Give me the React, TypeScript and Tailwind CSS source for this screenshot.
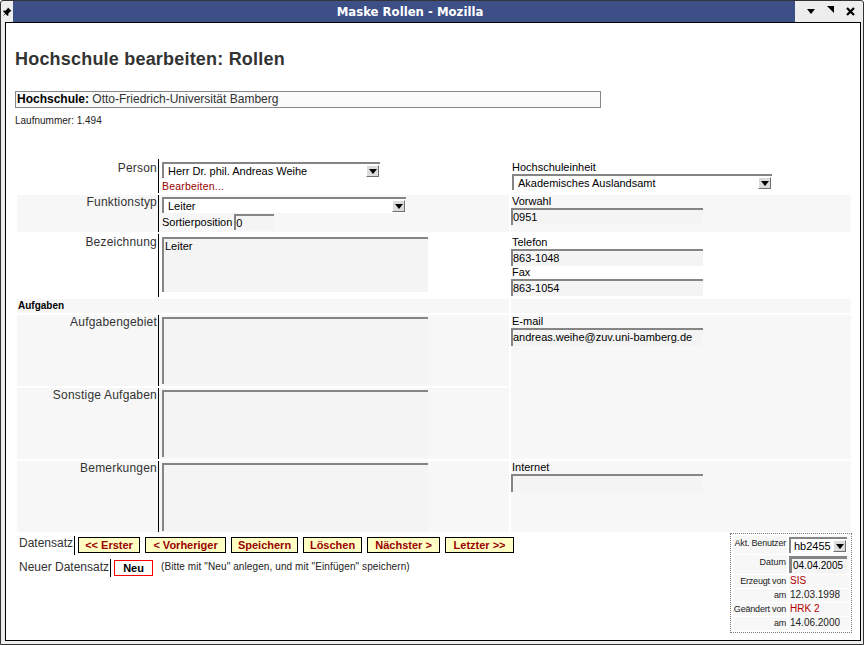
import React from 'react';

function Arrow() {
  return (
    <span className="mr-[1px] mt-[1px] flex h-[12px] w-[13px] shrink-0 items-center justify-center border-r border-b border-[#6f6f6f] border-l border-t border-l-white border-t-white bg-[#dcdcdc]">
      <svg width="8" height="5" viewBox="0 0 8 5">
        <path d="M0 0h8L4 5z" fill="#000" />
      </svg>
    </span>
  );
}

function Select({ value, className }: { value: string; className: string }) {
  return (
    <div className={`flex h-[16px] items-start border-t-2 border-l-2 border-[#858585] bg-white ${className}`}>
      <span className="flex-1 truncate pl-[4px] text-[11px] leading-[14px] text-black">{value}</span>
      <Arrow />
    </div>
  );
}

function Field({ value, className }: { value?: string; className: string }) {
  return (
    <div className={`border-t-2 border-l-2 border-[#858585] bg-[#f4f4f4] text-[11px] leading-[14px] text-black ${className}`}>
      {value}
    </div>
  );
}

function Area({ value, className }: { value?: string; className: string }) {
  return (
    <div className={`w-[266px] border-t-2 border-l-2 border-[#858585] bg-[#f4f4f4] pl-[1px] text-[11px] leading-[14px] text-black ${className}`}>
      {value}
    </div>
  );
}

function Label({ text, className = '' }: { text: string; className?: string }) {
  return (
    <div className={`border-r border-black pr-[1px] text-right text-[12px] leading-[14px] tracking-[0.2px] text-[#333] ${className}`}>
      {text}
    </div>
  );
}

function RLabel({ text }: { text: string }) {
  return <div className="pl-[1px] text-[11px] leading-[13px] text-black">{text}</div>;
}

const buttons: { t: string; w: string }[] = [
  { t: '<< Erster', w: 'w-[62px]' },
  { t: '< Vorheriger', w: 'w-[81px]' },
  { t: 'Speichern', w: 'w-[67px]' },
  { t: 'Löschen', w: 'w-[59px]' },
  { t: 'Nächster >', w: 'w-[73px]' },
  { t: 'Letzter >>', w: 'w-[69px]' },
];

const infoRows: { l: string; v: string; red?: boolean }[] = [
  { l: 'Erzeugt von', v: 'SIS', red: true },
  { l: 'am', v: '12.03.1998' },
  { l: 'Geändert von', v: 'HRK 2', red: true },
  { l: 'am', v: '14.06.2000' },
];

export default function App() {
  return (
    <div className="flex h-[645px] w-[864px] flex-col overflow-hidden rounded-t-[3px] border border-[#333] bg-[#ededed] font-['Liberation_Sans',Arial,sans-serif]">
      {/* title bar */}
      <div className="flex h-[21px] shrink-0">
        <div className="flex w-[12px] items-center justify-center">
          <svg width="10" height="10" viewBox="0 0 10 10">
            <path d="M6 0.5l3.5 3.5-1.2 0.6-2 2 0.2 1.6-0.8 0.8-2.6-2.6-2.6 3.1 3.1-2.6-2.6-2.6 0.8-0.8 1.6 0.2 2-2z" fill="#000" />
          </svg>
        </div>
        <div className="flex flex-1 items-center justify-center bg-[#3c5087] pl-[12px] font-['DejaVu_Sans_Condensed','DejaVu_Sans',sans-serif] text-[13px] font-bold text-white [font-stretch:condensed]">
          Maske Rollen - Mozilla
        </div>
        <div className="flex w-[68px] items-center">
          <svg className="ml-[12px]" width="8" height="5" viewBox="0 0 8 5">
            <path d="M0 0h8L4 5z" fill="#000" />
          </svg>
          <svg className="ml-[12px] -mt-[5px]" width="7" height="7" viewBox="0 0 7 7">
            <path d="M0 0h7v7z" fill="#000" />
          </svg>
          <svg className="ml-[12px]" width="9" height="9" viewBox="0 0 9 9">
            <path d="M1 1l7 7M8 1l-7 7" stroke="#000" strokeWidth="2.2" />
          </svg>
        </div>
      </div>

      {/* page */}
      <div className="mb-[3px] ml-[4px] mr-[2px] flex-1 border border-black bg-white pl-[9px] pt-[26px]">
        <h1 className="text-[18px] font-bold leading-[21px] tracking-[0.2px] text-[#333]">Hochschule bearbeiten: Rollen</h1>

        <div className="mt-[21px] h-[17px] w-[586px] border border-[#888] bg-[#fafafa] pl-[1px] text-[12px] leading-[15px] text-[#333]">
          <span className="font-bold text-black">Hochschule:</span> Otto-Friedrich-Universität Bamberg
        </div>

        <div className="mt-[7px] text-[10px] leading-[12px] text-[#222]">Laufnummer: 1.494</div>

        {/* form grid */}
        <div className="ml-[2px] mt-[32px] grid w-[834px] grid-cols-[142px_350px_342px] grid-rows-[34px_37px_63px_14px_71px_71px_71px] gap-y-[2px]">
          {/* row 1 */}
          <Label text="Person" className="pt-[2px]" />
          <div className="pl-[3px] pt-[3px]">
            <Select value="Herr Dr. phil. Andreas Weihe" className="w-[218px]" />
            <div className="mt-[2px] text-[10.5px] leading-[12px] tracking-[0.2px] text-[#990000]">Bearbeiten...</div>
          </div>
          <div className="ml-[2px] pt-[2px]">
            <RLabel text="Hochschuleinheit" />
            <div className="pl-[1px]">
              <Select value="Akademisches Auslandsamt" className="w-[260px]" />
            </div>
          </div>

          {/* row 2 */}
          <Label text="Funktionstyp" className="bg-[#f7f7f7]" />
          <div className="bg-[#f7f7f7] pl-[3px] pt-[2px]">
            <Select value="Leiter" className="w-[244px]" />
            <div className="mt-[1px] flex items-end">
              <span className="pb-[1px] text-[11px] leading-[13px] text-black">Sortierposition</span>
              <Field value="0" className="ml-[2px] h-[16px] w-[40px]" />
            </div>
          </div>
          <div className="ml-[2px] bg-[#f7f7f7]">
            <RLabel text="Vorwahl" />
            <Field value="0951" className="h-[17px] w-[192px]" />
          </div>

          {/* row 3 */}
          <Label text="Bezeichnung" className="pt-[1px]" />
          <div className="pl-[3px] pt-[3px]">
            <Area value="Leiter" className="h-[55px]" />
          </div>
          <div className="ml-[2px] pt-[2px]">
            <RLabel text="Telefon" />
            <Field value="863-1048" className="h-[17px] w-[192px]" />
            <RLabel text="Fax" />
            <Field value="863-1054" className="h-[17px] w-[192px]" />
          </div>

          {/* Aufgaben header */}
          <div className="col-span-2 bg-[#f7f7f7] pl-[1px] text-[10px] font-bold leading-[14px] text-black">Aufgaben</div>
          <div className="ml-[2px] bg-[#f7f7f7]" />

          {/* row 5 */}
          <Label text="Aufgabengebiet" className="bg-[#f7f7f7]" />
          <div className="bg-[#f7f7f7] pl-[3px] pt-[2px]">
            <Area className="h-[67px]" />
          </div>
          <div className="row-span-2 ml-[2px] bg-[#f7f7f7]">
            <RLabel text="E-mail" />
            <Field value="andreas.weihe@zuv.uni-bamberg.de" className="h-[18px] w-[192px]" />
          </div>

          {/* row 6 */}
          <Label text="Sonstige Aufgaben" className="bg-[#f7f7f7]" />
          <div className="bg-[#f7f7f7] pl-[3px] pt-[2px]">
            <Area className="h-[67px]" />
          </div>

          {/* row 7 */}
          <Label text="Bemerkungen" className="bg-[#f7f7f7]" />
          <div className="bg-[#f7f7f7] pl-[3px] pt-[2px]">
            <Area className="h-[68px]" />
          </div>
          <div className="ml-[2px] bg-[#f7f7f7]">
            <RLabel text="Internet" />
            <Field className="h-[18px] w-[192px]" />
          </div>
        </div>

        {/* bottom section */}
        <div className="ml-[2px] mt-[1px] flex w-[835px] justify-between">
          <div className="pt-[3px]">
            <div className="flex items-start">
              <span className="pl-[2px] text-[12px] leading-[14px] text-[#333]">Datensatz</span>
              <span className="ml-[1px] h-[19px] w-px bg-black" />
              <div className="ml-[3px] mt-[1px] flex gap-[5px]">
                {buttons.map((b) => (
                  <div
                    key={b.t}
                    className={`flex h-[16px] items-center justify-center border border-black bg-[#ffffc4] text-[11px] font-bold leading-[14px] text-[#990000] ${b.w}`}
                  >
                    {b.t}
                  </div>
                ))}
              </div>
            </div>
            <div className="mt-[4px] flex items-start">
              <span className="pl-[2px] pt-[1px] text-[12px] leading-[14px] text-[#333]">Neuer Datensatz</span>
              <span className="ml-[1px] h-[18px] w-px bg-black" />
              <div className="ml-[3px] mt-[1px] flex h-[16px] w-[39px] items-center justify-center border border-[#ff0000] bg-white text-[11px] font-bold text-black">
                Neu
              </div>
              <span className="ml-[8px] mt-[2px] text-[10px] leading-[12px] tracking-[0.1px] text-[#222]">
                (Bitte mit "Neu" anlegen, und mit "Einfügen" speichern)
              </span>
            </div>
          </div>

          {/* info box */}
          <div className="h-[100px] w-[122px] border border-dotted border-[#777] p-[2px]">
            <div className="grid grid-cols-[54px_60px] grid-rows-[18px_19px_13px_13px_13px_13px] gap-x-[2px] gap-y-[1px] text-[9px] leading-[12px]">
              <div className="whitespace-nowrap bg-[#f7f7f7] pr-[1px] pt-[1px] text-right tracking-[-0.2px] text-[#222]">Akt. Benutzer</div>
              <div className="bg-[#f7f7f7] pt-[1px]">
                <div className="flex h-[16px] w-[58px] items-start border-t-2 border-l-2 border-[#858585] bg-white">
                  <span className="flex-1 pl-[3px] text-[11px] leading-[14px] text-black">hb2455</span>
                  <Arrow />
                </div>
              </div>
              <div className="whitespace-nowrap bg-[#f7f7f7] pr-[1px] pt-[1px] text-right text-[#222]">Datum</div>
              <div className="bg-[#f7f7f7] pt-[1px]">
                <div className="h-[17px] w-[58px] border-t-[3px] border-l-[3px] border-[#858585] bg-[#f4f4f4] pl-[1px] text-[10px] leading-[14px] text-black">
                  04.04.2005
                </div>
              </div>
              {infoRows.map((r, i) => (
                <React.Fragment key={i}>
                  <div className="whitespace-nowrap bg-[#f7f7f7] pr-[1px] text-right tracking-[-0.2px] text-[#222]">{r.l}</div>
                  <div className={`whitespace-nowrap bg-[#f7f7f7] pl-[1px] text-[10px] ${r.red ? 'text-[#b00000]' : 'text-[#222]'}`}>{r.v}</div>
                </React.Fragment>
              ))}
            </div>
          </div>
        </div>
      </div>
    </div>
  );
}
